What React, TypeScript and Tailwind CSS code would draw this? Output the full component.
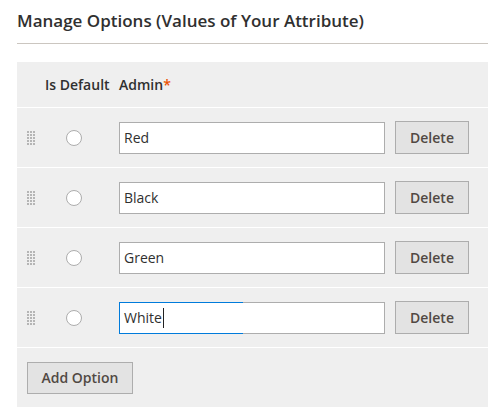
const options = ["Red", "Black", "Green", "White"];

function DragHandle() {
  return (
    <div className="grid w-[8px] grid-cols-3 gap-[1px]">
      {Array.from({ length: 15 }).map((_, i) => (
        <span key={i} className="h-[2px] w-[2px] bg-[#b5b5b5]" />
      ))}
    </div>
  );
}

function OptionRow({ value, focused }: { value: string; focused?: boolean }) {
  return (
    <div className="flex h-[60px] items-center border-b border-white pl-[10px]">
      <DragHandle />
      <div className="w-[84px] pl-[31px]">
        <span className="block h-[16px] w-[16px] rounded-full border border-[#adadad] bg-white" />
      </div>
      <div
        className={`relative flex h-[32px] w-[266px] items-center border bg-white px-[4px] text-[14px] text-[#303030] ${
          focused ? "border-[#adadad] border-l-[#007bdb]" : "border-[#adadad]"
        }`}
      >
        {value}
        {focused && <span className="ml-[1px] h-[20px] w-[1px] bg-[#222]" />}
        {focused && (
          <>
            <span className="absolute -top-px -left-px h-px w-[124px] bg-[#007bdb]" />
            <span className="absolute -bottom-px -left-px h-px w-[124px] bg-[#007bdb]" />
          </>
        )}
      </div>
      <button className="ml-[10px] h-[33px] w-[74px] border border-[#adadad] bg-[#e3e3e3] text-[14px] font-semibold text-[#514943]">
        Delete
      </button>
    </div>
  );
}

export default function App() {
  return (
    <div className="min-h-[414px] bg-white pr-[6px] pl-[17px] font-['Open_Sans',sans-serif] text-[#303030]">
      <h1 className="border-b border-[#cbc6c0] pt-[9px] pb-[10px] text-[17px] leading-[24px] font-semibold text-[#303030]">
        Manage Options (Values of Your Attribute)
      </h1>

      <div className="mt-[18px] bg-[#efefef]">
        <div className="flex h-[46px] items-center border-b border-white pl-[28px] text-[14px] font-semibold">
          <span className="w-[74px]">Is Default</span>
          <span>
            Admin<span className="text-[#eb5202]">*</span>
          </span>
        </div>

        {options.map((o, i) => (
          <OptionRow key={o} value={o} focused={i === options.length - 1} />
        ))}

        <div className="flex h-[59px] items-center pl-[10px]">
          <button className="h-[32px] w-[106px] border border-[#adadad] bg-[#e3e3e3] text-[14px] font-semibold text-[#514943]">
            Add Option
          </button>
        </div>
      </div>
    </div>
  );
}
